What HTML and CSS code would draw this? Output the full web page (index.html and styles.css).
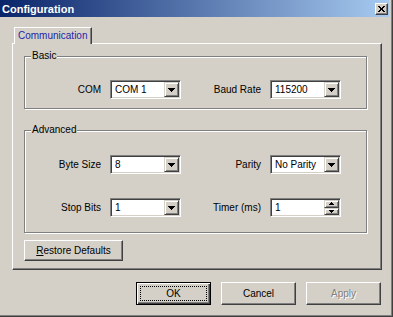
FILE: index.html
```html
<!DOCTYPE html>
<html lang="en">
<head>
    <meta charset="UTF-8">
    <title>Configuration</title>
    <link rel="stylesheet" href="styles.css">
</head>
<body>
    <div class="window">
        <div class="titlebar">
            <span class="title">Configuration</span>
            <span class="close-btn">
                <svg width="7" height="6" viewBox="0 0 7 6" shape-rendering="crispEdges">
                    <path d="M0 0h2v1h-2zM5 0h2v1h-2zM1 1h2v1h-2zM4 1h2v1h-2zM2 2h3v2h-3zM1 4h2v1h-2zM4 4h2v1h-2zM0 5h2v1h-2zM5 5h2v1h-2z" fill="#000"/>
                </svg>
            </span>
        </div>

        <div class="main">
            <div class="tabs">
                <div class="tab active">Communication</div>
            </div>

            <div class="tab-page">
                <fieldset class="group group-basic">
                    <legend>Basic</legend>
                    <div class="fields">
                        <label>COM</label>
                        <div class="combo">
                            <span class="combo-value">COM 1</span>
                            <span class="combo-btn"><svg width="7" height="4" shape-rendering="crispEdges"><path d="M0 0h7v1h-1v1h-1v1h-1v1h-1v-1h-1v-1h-1v-1h-1z" fill="#000"/></svg></span>
                        </div>
                        <label>Baud Rate</label>
                        <div class="combo">
                            <span class="combo-value">115200</span>
                            <span class="combo-btn"><svg width="7" height="4" shape-rendering="crispEdges"><path d="M0 0h7v1h-1v1h-1v1h-1v1h-1v-1h-1v-1h-1v-1h-1z" fill="#000"/></svg></span>
                        </div>
                    </div>
                </fieldset>

                <fieldset class="group group-advanced">
                    <legend>Advanced</legend>
                    <div class="fields">
                        <label>Byte Size</label>
                        <div class="combo">
                            <span class="combo-value">8</span>
                            <span class="combo-btn"><svg width="7" height="4" shape-rendering="crispEdges"><path d="M0 0h7v1h-1v1h-1v1h-1v1h-1v-1h-1v-1h-1v-1h-1z" fill="#000"/></svg></span>
                        </div>
                        <label>Parity</label>
                        <div class="combo">
                            <span class="combo-value">No Parity</span>
                            <span class="combo-btn"><svg width="7" height="4" shape-rendering="crispEdges"><path d="M0 0h7v1h-1v1h-1v1h-1v1h-1v-1h-1v-1h-1v-1h-1z" fill="#000"/></svg></span>
                        </div>
                        <label>Stop Bits</label>
                        <div class="combo">
                            <span class="combo-value">1</span>
                            <span class="combo-btn"><svg width="7" height="4" shape-rendering="crispEdges"><path d="M0 0h7v1h-1v1h-1v1h-1v1h-1v-1h-1v-1h-1v-1h-1z" fill="#000"/></svg></span>
                        </div>
                        <label>Timer (ms)</label>
                        <div class="combo spin">
                            <span class="combo-value">1</span>
                            <span class="spin-btns">
                                <span class="spin-btn"><svg width="5" height="3" shape-rendering="crispEdges"><path d="M2 0h1v1h1v1h1v1h-5v-1h1v-1h1z" fill="#000"/></svg></span>
                                <span class="spin-btn"><svg width="5" height="3" shape-rendering="crispEdges"><path d="M0 0h5v1h-1v1h-1v1h-1v-1h-1v-1h-1z" fill="#000"/></svg></span>
                            </span>
                        </div>
                    </div>
                </fieldset>

                <button class="btn btn-restore"><u>R</u>estore Defaults</button>
            </div>

            <div class="actions">
                <button class="btn btn-default">OK</button>
                <button class="btn">Cancel</button>
                <button class="btn" disabled>Apply</button>
            </div>
        </div>
    </div>
</body>
</html>
```

FILE: styles.css
```css
body {
    margin: 0;
    background-color: #d4d0c8;
    font-family: "Liberation Sans", Arial, sans-serif;
    font-size: 10px;
    color: #000;
}
.window {
    width: 393px;
    height: 317px;
    box-sizing: border-box;
    box-shadow: inset -1px -1px #404040, inset -2px -2px #808080;
    overflow: hidden;
}
.titlebar {
    display: flex;
    align-items: center;
    justify-content: space-between;
    width: 389px;
    height: 17px;
    background: linear-gradient(to right, #0a246a, #a6caf0);
}
.title {
    color: #fff;
    font-weight: bold;
    font-size: 11px;
    padding-left: 2px;
}
.close-btn {
    display: flex;
    align-items: center;
    justify-content: center;
    width: 13px;
    height: 12px;
    margin-right: 1px;
    box-sizing: border-box;
    background: #d4d0c8;
    border: 1px solid;
    border-color: #fff #404040 #404040 #fff;
    box-shadow: inset -1px -1px #808080;
}
.main {
    padding: 10px 11px 0 12px;
}
.tabs {
    display: flex;
    height: 16px;
}
.tab {
    position: relative;
    z-index: 1;
    margin-left: 2px;
    width: 78px;
    height: 17px;
    box-sizing: border-box;
    padding-left: 3px;
    line-height: 15px;
    background: #d4d0c8;
    color: #1f1fa8;
    border: 1px solid;
    border-color: #fff #404040 transparent #fff;
    border-bottom: none;
    box-shadow: inset -1px 0 #808080;
}
.tab-page {
    width: 370px;
    height: 227px;
    box-sizing: border-box;
    border: 1px solid;
    border-color: #fff #404040 #404040 #fff;
    box-shadow: inset -1px -1px #808080;
}
.group {
    margin: 6px 0 0 11px;
    width: 343px;
    min-inline-size: 0;
    box-sizing: border-box;
    padding: 18px 0 9px;
    border: 1px solid #808080;
    box-shadow: inset 1px 1px #fff, 1px 1px #fff;
}
.group legend {
    margin-left: 6px;
    padding: 0 1px;
    line-height: 12px;
    background: #d4d0c8;
}
.group-advanced {
    margin-top: 15px;
    padding: 19px 0 15px;
}
.fields {
    display: grid;
    grid-template-columns: 76px 71px 71px 71px;
    column-gap: 9px;
    row-gap: 24px;
    align-items: center;
}
.fields label {
    text-align: right;
}
.combo {
    display: flex;
    height: 19px;
    box-sizing: border-box;
    padding: 1px;
    background: #fff;
    border: 1px solid;
    border-color: #808080 #fff #fff #808080;
    box-shadow: inset 1px 1px #404040, inset -1px -1px #d4d0c8;
}
.combo-value {
    flex: 1;
    padding: 1px 0 0 3px;
    line-height: 14px;
}
.combo-btn, .spin-btn {
    display: flex;
    align-items: center;
    justify-content: center;
    box-sizing: border-box;
    background: #d4d0c8;
    border: 1px solid;
    border-color: #d4d0c8 #404040 #404040 #d4d0c8;
    box-shadow: inset 1px 1px #fff, inset -1px -1px #808080;
}
.combo-btn {
    width: 15px;
}
.spin-btns {
    display: flex;
    flex-direction: column;
    width: 15px;
}
.spin-btn {
    flex: 1;
}
.btn {
    width: 75px;
    height: 23px;
    box-sizing: border-box;
    padding: 0;
    font: inherit;
    color: #000;
    background: #d4d0c8;
    border: 1px solid;
    border-color: #fff #404040 #404040 #fff;
    box-shadow: inset -1px -1px #808080;
}
.btn-default {
    border-color: #000;
    box-shadow: inset 1px 1px #fff, inset -1px -1px #404040, inset -2px -2px #808080;
    outline: 1px dotted #000;
    outline-offset: -5px;
}
.btn:disabled {
    color: #808080;
    text-shadow: 1px 1px #fff;
}
.btn-restore {
    display: block;
    width: 99px;
    height: 21px;
    margin: 7px 0 0 11px;
}
.actions {
    display: flex;
    justify-content: flex-end;
    gap: 10px;
    margin-top: 12px;
    padding-right: 1px;
}
```
